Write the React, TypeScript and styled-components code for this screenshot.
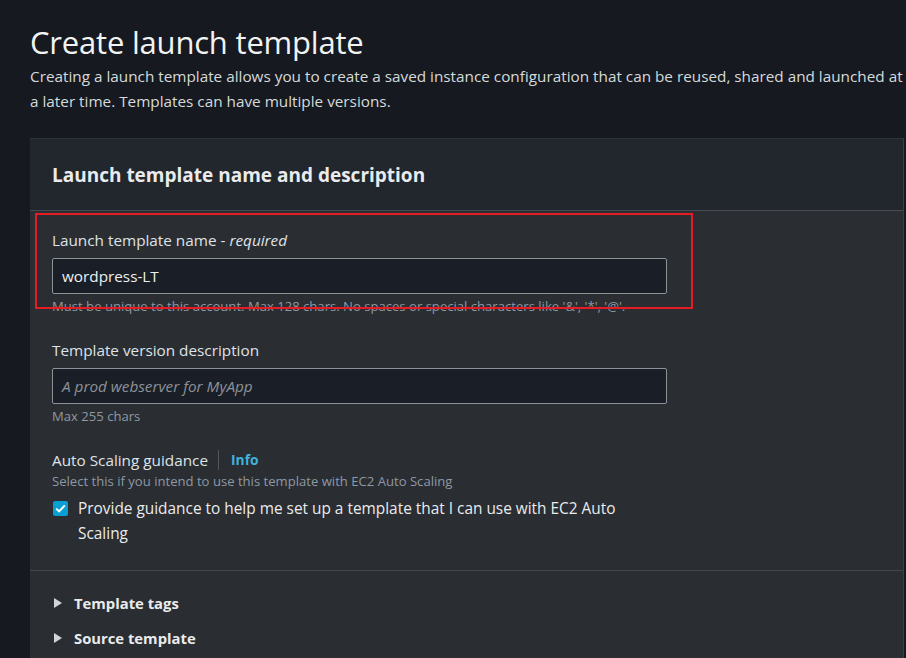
import styled, { createGlobalStyle } from 'styled-components';

const GlobalStyle = createGlobalStyle`
  html, body {
    margin: 0;
    padding: 0;
    background: #16191f;
  }
  body {
    font-family: "Open Sans", "Noto Sans", sans-serif;
    color: #e9ebed;
    overflow: hidden;
  }
`;

const Page = styled.div`
  padding: 22px 0 0 30px;
  width: 906px;
  height: 658px;
  box-sizing: border-box;
`;

const Title = styled.h1`
  margin: 0;
  font-size: 31px;
  font-weight: 400;
  line-height: 40px;
  color: #f2f3f3;
  letter-spacing: -0.2px;
`;

const Description = styled.p`
  margin: 2px 0 0;
  font-size: 15.3px;
  line-height: 25px;
  color: #d5dbdb;
  width: 876px;
`;

const Panel = styled.section`
  margin-top: 24px;
  width: 874px;
  background: #2a2d32;
  border-top: 1px solid #2f333a;
  border-right: 1px solid #3a3f46;
  box-sizing: border-box;
`;

const PanelHeader = styled.div`
  height: 71px;
  padding: 0 22px;
  display: flex;
  align-items: center;
  background: #22262d;
  border-bottom: 1px solid #464b53;
`;

const PanelTitle = styled.h2`
  margin: 0;
  font-size: 19px;
  font-weight: 700;
  color: #e9ebed;
`;

const PanelBody = styled.div`
  padding: 19px 22px 24px;
  display: flex;
  flex-direction: column;
  gap: 25px;
  border-bottom: 1px solid #41464e;
`;

const Field = styled.div`
  position: relative;
  display: flex;
  flex-direction: column;
`;

const Label = styled.label`
  font-size: 15.3px;
  line-height: 20px;
  color: #dfe3e6;
  display: flex;
  align-items: center;

  em {
    font-style: italic;
    margin-left: 4px;
  }
`;

const Input = styled.div<{ $placeholder?: boolean }>`
  margin-top: 8px;
  width: 615px;
  height: 36px;
  box-sizing: border-box;
  padding: 0 9px;
  display: flex;
  align-items: center;
  background: #1a1f27;
  border: 1px solid #8d9198;
  border-radius: 2px;
  font-size: 15.3px;
  color: ${(p) => (p.$placeholder ? '#8d9198' : '#eef0f2')};
  font-style: ${(p) => (p.$placeholder ? 'italic' : 'normal')};
`;

const Hint = styled.div<{ $tight?: boolean }>`
  margin-top: ${(p) => (p.$tight ? '2px' : '3px')};
  font-size: 13.1px;
  line-height: 18px;
  color: #8d99a4;
`;

const Annotation = styled.div`
  position: absolute;
  left: -17px;
  top: -17px;
  width: 658px;
  height: 96px;
  border: 2px solid #e51c23;
  box-sizing: border-box;
  pointer-events: none;
`;

const Separator = styled.span`
  width: 1px;
  height: 20px;
  background: #535860;
  margin: 0 12px 0 10px;
`;

const InfoLink = styled.a`
  font-size: 13.8px;
  font-weight: 700;
  color: #3fb3dc;
  text-decoration: none;
`;

const CheckRow = styled.div`
  margin-top: 6px;
  display: flex;
  align-items: flex-start;
  gap: 10px;
`;

const CheckBox = styled.span`
  flex: none;
  width: 15px;
  height: 15px;
  margin: 5px 0 0 1px;
  border-radius: 2px;
  background: #0a9fd2;
  display: flex;
  align-items: center;
  justify-content: center;
`;

const CheckText = styled.span`
  width: 560px;
  font-size: 15.4px;
  line-height: 25px;
  color: #e9ebed;
`;

const Expanders = styled.div`
  padding: 14px 22px 30px;
  display: flex;
  flex-direction: column;
`;

const Expander = styled.div`
  height: 35px;
  display: flex;
  align-items: center;
  gap: 12px;
  font-size: 14.8px;
  font-weight: 700;
  color: #e9ebed;
`;

const Caret = styled.span`
  width: 0;
  height: 0;
  margin-left: 2px;
  border-top: 5px solid transparent;
  border-bottom: 5px solid transparent;
  border-left: 8px solid #d1d5db;
`;

export default function App() {
  return (
    <Page>
      <GlobalStyle />
      <Title>Create launch template</Title>
      <Description>
        Creating a launch template allows you to create a saved instance configuration that can be reused, shared and
        launched at a later time. Templates can have multiple versions.
      </Description>
      <Panel>
        <PanelHeader>
          <PanelTitle>Launch template name and description</PanelTitle>
        </PanelHeader>
        <PanelBody>
          <Field>
            <Label>
              Launch template name -<em>required</em>
            </Label>
            <Input>wordpress-LT</Input>
            <Hint>Must be unique to this account. Max 128 chars. No spaces or special characters like '&amp;', '*', '@'.</Hint>
            <Annotation />
          </Field>
          <Field>
            <Label>Template version description</Label>
            <Input $placeholder>A prod webserver for MyApp</Input>
            <Hint>Max 255 chars</Hint>
          </Field>
          <Field>
            <Label>
              Auto Scaling guidance
              <Separator />
              <InfoLink>Info</InfoLink>
            </Label>
            <Hint $tight>Select this if you intend to use this template with EC2 Auto Scaling</Hint>
            <CheckRow>
              <CheckBox>
                <svg width="11" height="9" viewBox="0 0 11 9">
                  <path d="M1.2 4.6 L4.1 7.4 L9.8 1.4" fill="none" stroke="#fff" strokeWidth="2" />
                </svg>
              </CheckBox>
              <CheckText>Provide guidance to help me set up a template that I can use with EC2 Auto Scaling</CheckText>
            </CheckRow>
          </Field>
        </PanelBody>
        <Expanders>
          <Expander>
            <Caret />
            Template tags
          </Expander>
          <Expander>
            <Caret />
            Source template
          </Expander>
        </Expanders>
      </Panel>
    </Page>
  );
}
